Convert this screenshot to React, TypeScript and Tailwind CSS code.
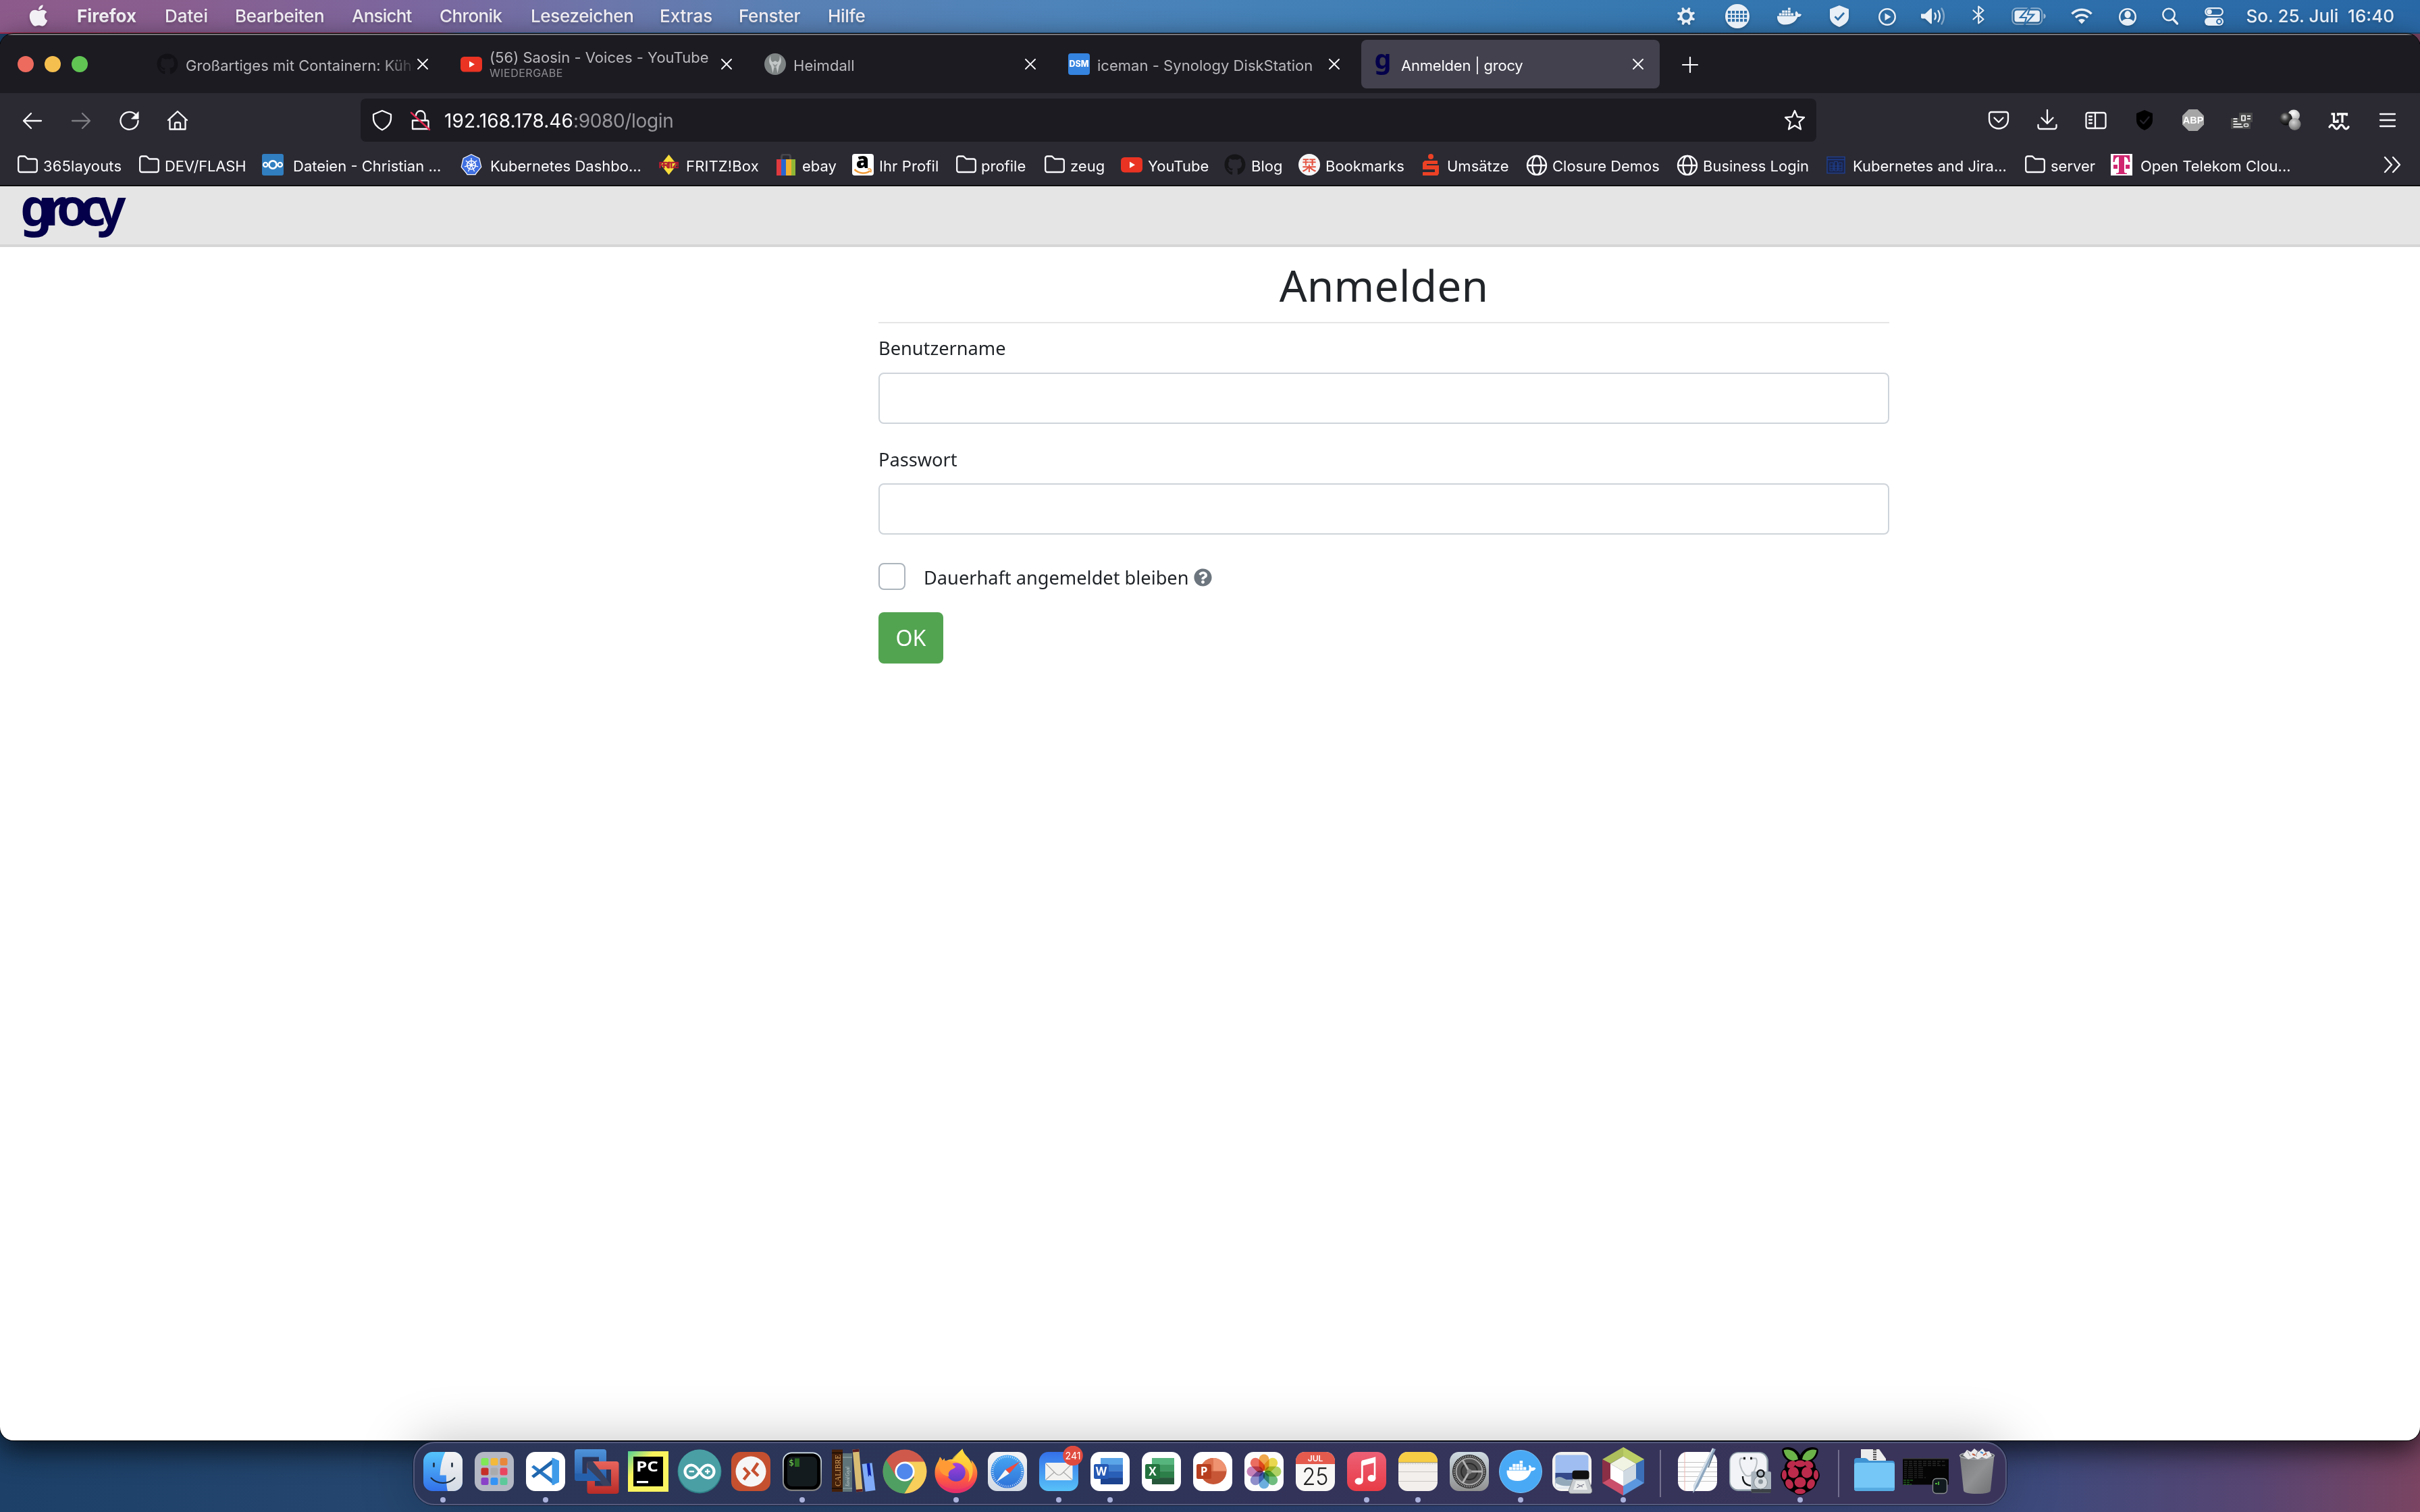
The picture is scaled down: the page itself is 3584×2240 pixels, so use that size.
import React from "react";
import type { ReactNode } from "react";
import { FaApple, FaDocker, FaGithub, FaQuestionCircle } from "react-icons/fa";

/* ------------------------------------------------------------------ */
/* macOS menu bar                                                      */
/* ------------------------------------------------------------------ */

const menus = [
  { label: "Firefox", cls: "w-[130px] font-bold" },
  { label: "Datei", cls: "w-[104px]" },
  { label: "Bearbeiten", cls: "w-[173px] tracking-[-0.28px]" },
  { label: "Ansicht", cls: "w-[130px] tracking-[-0.8px]" },
  { label: "Chronik", cls: "w-[135px] tracking-[-0.63px]" },
  { label: "Lesezeichen", cls: "w-[191px] tracking-[-0.35px]" },
  { label: "Extras", cls: "w-[117px]" },
  { label: "Fenster", cls: "w-[132px] tracking-[-0.26px]" },
  { label: "Hilfe", cls: "w-[60px] tracking-[-0.31px]" },
];

function MenuBar() {
  return (
    <div className="flex h-12 w-full shrink-0 items-center bg-[linear-gradient(90deg,#8d5b8b_0%,#885f90_8%,#7a68a0_18%,#6c76aa_25%,#5a80b4_32%,#4d84ba_44%,#4280b6_55%,#3577b0_70%,#2e70ac_84%,#2968a6_100%)] pl-[43px] pr-[38px] text-[26px] font-medium text-[#f3f0f5]">
      <FaApple className="mt-[-3px] h-9 w-7 shrink-0 drop-shadow-[0_2px_2px_rgba(0,0,0,0.25)]" />
      <div className="ml-[43px] flex h-12 items-center leading-[48px] [text-shadow:0_3px_4px_rgba(0,0,0,0.22)]">
        {menus.map((m) => (
          <span key={m.label} className={`shrink-0 whitespace-nowrap ${m.cls}`}>
            {m.label}
          </span>
        ))}
      </div>
      <div className="ml-auto flex h-12 items-center text-[#e9eff6] drop-shadow-[0_2px_2px_rgba(0,0,0,0.2)]">
        {/* gear */}
        <svg className="h-[28px] w-[28px]" viewBox="0 0 28 28">
          <circle cx="14" cy="14" r="7.6" fill="none" stroke="currentColor" strokeWidth="4" />
          {[22, 67, 112, 157, 202, 247, 292, 337].map((a) => (
            <path key={a} d="M11.6 5.5l1-5h2.8l1 5z" fill="currentColor" transform={`rotate(${a} 14 14)`} />
          ))}
        </svg>
        {/* grid globe */}
        <svg className="ml-[44px] h-9 w-9" viewBox="0 0 36 36">
          <circle cx="18" cy="18" r="18" fill="currentColor" />
          {[10, 16, 22].map((y) =>
            [4, 10, 16, 22, 28].map((x) => <rect key={`${x}-${y}`} x={x} y={y} width="4.2" height="4.2" fill="#2f6fa8" />),
          )}
        </svg>
        <FaDocker className="ml-[41px] h-[30px] w-9" />
        {/* shield check */}
        <svg className="ml-[41px] h-8 w-[30px]" viewBox="0 0 30 32">
          <path d="M15 0l14 5.500v11C29 24 23 29 15 32 7 29 1 24 1 16.500V5.500z" fill="currentColor" />
          <path d="M8.500 16.500l4.500 4.500 9-10" fill="none" stroke="#2f6fa8" strokeWidth="2.800" />
        </svg>
        {/* play */}
        <svg className="ml-[43px] h-[28px] w-[26px]" viewBox="0 0 26 28">
          <circle cx="13" cy="15" r="11.800" fill="none" stroke="currentColor" strokeWidth="2.400" />
          <path d="M9.500 9.500v11l9-5.500z" fill="currentColor" />
        </svg>
        {/* volume */}
        <svg className="ml-[37px] h-[28px] w-9" viewBox="0 0 36 28">
          <path d="M0 10.500h6l8-7.500c1-.8 2-.3 2 .8v20.400c0 1.100-1 1.600-2 .8l-8-7.500H2a2 2 0 0 1-2-2z" fill="currentColor" />
          <g fill="none" stroke="currentColor" strokeWidth="2.400" strokeLinecap="round">
            <path d="M20.500 9.500c1.600 2.700 1.600 6.300 0 9" />
            <path d="M25.500 6c3 5 3 11 0 16" />
            <path d="M30.500 2.500c4.600 7 4.600 16 0 23" opacity=".45" />
          </g>
        </svg>
        {/* bluetooth */}
        <svg className="ml-[40px] mt-[-4px] h-[28px] w-[18px]" viewBox="0 0 18 28">
          <path d="M1.500 7.500l15 13L9.200 26.500v-25L16.500 7.500l-15 13" fill="none" stroke="currentColor" strokeWidth="2.200" strokeLinejoin="round" strokeLinecap="round" />
        </svg>
        {/* battery */}
        <svg className="ml-[40px] h-[26px] w-[51px]" viewBox="0 0 51 26">
          <rect x="1.200" y="1.200" width="44" height="23.600" rx="6.500" fill="none" stroke="currentColor" strokeWidth="2" opacity=".5" />
          <path d="M47.500 9v8c2.200-.8 3.200-2.200 3.200-4s-1-3.200-3.200-4z" fill="currentColor" opacity=".6" />
          <rect x="4.500" y="4.500" width="37.400" height="17" rx="3.500" fill="currentColor" />
          <path d="M26 0L13 15h9l-3 11 14-15.500h-9L27.500 0z" fill="currentColor" stroke="#2f6fa8" strokeWidth="2.200" />
        </svg>
        {/* wifi */}
        <svg className="ml-[37px] h-[26px] w-8" viewBox="0 0 32 26">
          <g fill="none" stroke="currentColor" strokeWidth="3.600">
            <path d="M1.500 9.500c8-8.400 21-8.400 29 0" />
            <path d="M7 15c5-5 13-5 18 0" />
          </g>
          <path d="M11 19c2.800-2.700 7.200-2.700 10 0l-5 5.500z" fill="currentColor" />
        </svg>
        {/* user */}
        <svg className="ml-[39px] h-[28px] w-[26px]" viewBox="0 0 26 28">
          <circle cx="13" cy="15" r="11.800" fill="none" stroke="currentColor" strokeWidth="2.400" />
          <ellipse cx="13" cy="11.500" rx="4.600" ry="5.400" fill="currentColor" />
          <path d="M4.500 22c2-3.600 5-4 8.500-4s6.500.4 8.500 4c-2.400 2.800-5.200 4-8.500 4s-6.100-1.200-8.500-4z" fill="currentColor" />
        </svg>
        {/* search */}
        <svg className="ml-[38px] h-[26px] w-6" viewBox="0 0 24 26">
          <circle cx="10" cy="10.500" r="8.700" fill="none" stroke="currentColor" strokeWidth="2.500" />
          <path d="M16 17l6.500 7" stroke="currentColor" strokeWidth="3.400" strokeLinecap="round" />
        </svg>
        {/* control centre */}
        <svg className="ml-[39px] h-[28px] w-[28px]" viewBox="0 0 28 28">
          <rect x="1.200" y="2.200" width="25.600" height="10.600" rx="5.300" fill="none" stroke="currentColor" strokeWidth="2.200" />
          <circle cx="7" cy="7.500" r="3.800" fill="currentColor" />
          <rect x="0" y="16" width="28" height="12" rx="6" fill="currentColor" />
          <circle cx="21.500" cy="22" r="3.400" fill="none" stroke="#2c6ba8" strokeWidth="2" />
        </svg>
        <span className="ml-[34px] whitespace-pre leading-[48px]">{"So. 25. Juli  16:40"}</span>
      </div>
    </div>
  );
}

/* ------------------------------------------------------------------ */
/* Firefox tab strip                                                   */
/* ------------------------------------------------------------------ */

function CloseX() {
  return (
    <svg className="h-4 w-4 shrink-0" viewBox="0 0 16 16">
      <path d="M1 1l14 14M15 1L1 15" stroke="#fbfbfe" strokeWidth="1.900" strokeLinecap="round" />
    </svg>
  );
}

function YouTubeIcon() {
  return (
    <svg className="h-8 w-8 shrink-0" viewBox="0 0 32 32">
      <rect x="0" y="5" width="32" height="22.500" rx="5.500" fill="#ea3323" />
      <path d="M13 11.500v9.500l8-4.750z" fill="#fff" />
    </svg>
  );
}

function Tab({ icon, title, sub, active, fade }: { icon: ReactNode; title: string; sub?: string; active?: boolean; fade?: boolean }) {
  return (
    <div className="flex h-full w-[450px] shrink-0 items-center px-1">
      <div className={`flex h-[72px] w-[442px] items-center pl-4 pr-[24px] ${active ? "rounded-lg bg-[#42414d] text-[#fbfbfe]" : "text-[#b9b9bd]"}`}>
        {icon}
        <div
          className={`ml-[11px] w-[337px] overflow-hidden whitespace-nowrap text-[22px] leading-7 ${
            fade ? "[mask-image:linear-gradient(90deg,#000_86%,transparent_102%)]" : ""
          } ${sub ? "mt-[-1px]" : "mt-[3px]"}`}
        >
          <div className={active ? "tracking-[-0.2px]" : "tracking-[0.03px]"}>{title}</div>
          {sub && <div className="mt-[-1px] text-[16px] leading-[20px] tracking-[0.5px] text-[#8d8d92]">{sub}</div>}
        </div>
        <div className="ml-auto">
          <CloseX />
        </div>
      </div>
    </div>
  );
}

function TabStrip() {
  return (
    <div className="flex h-[88px] shrink-0 items-center border-t-2 border-[#77777b] bg-[#1c1b22]">
      <div className="flex h-full w-[212px] shrink-0 items-center gap-4 pl-[26px]">
        <span className="h-6 w-6 rounded-full bg-[#ed6a5e]" />
        <span className="h-6 w-6 rounded-full bg-[#f5bf4f]" />
        <span className="h-6 w-6 rounded-full bg-[#61c554]" />
      </div>
      <Tab icon={<FaGithub className="h-8 w-8 shrink-0 text-[#121216]" />} title="Großartiges mit Containern: Kühlsch" fade />
      <Tab icon={<YouTubeIcon />} title="(56) Saosin - Voices - YouTube" sub="WIEDERGABE" />
      <Tab
        icon={
          <svg className="h-8 w-8 shrink-0" viewBox="0 0 32 32">
            <circle cx="16" cy="16" r="16" fill="#7e8384" />
            <path d="M9.500 3.500c-3.500 6-3 11 .5 15l2.500 11 2-9h3l2 9 2.500-11c3.500-4 4-9 .5-15 .8 5.500-.5 8-3 9.500L16 11l-3.500 2c-2.500-1.500-3.800-4-3-9.500z" fill="#c3c7c7" />
            <path d="M12 15l4 2.500 4-2.500-2.500 5h-3z" fill="#8d9192" />
          </svg>
        }
        title="Heimdall"
      />
      <Tab
        icon={
          <svg className="h-8 w-8 shrink-0" viewBox="0 0 32 32">
            <rect width="32" height="32" rx="4" fill="#3584e0" />
            <text x="16" y="20" textAnchor="middle" fontFamily="Inter" fontWeight="800" fontSize="12.500" fill="#fff">
              DSM
            </text>
          </svg>
        }
        title="iceman - Synology DiskStation"
      />
      <Tab
        active
        icon={
          <svg className="h-8 w-8 shrink-0 overflow-visible" viewBox="0 0 32 32">
            <text x="16" y="22.500" textAnchor="middle" fontFamily="Noto Sans" fontWeight="700" fontSize="40" fill="#04004a">
              g
            </text>
          </svg>
        }
        title="Anmelden | grocy"
      />
      <svg className="ml-[29px] mt-[2px] h-6 w-6 shrink-0" viewBox="0 0 24 24">
        <path d="M12 1v22M1 12h22" stroke="#fbfbfe" strokeWidth="2.200" strokeLinecap="round" />
      </svg>
    </div>
  );
}

/* ------------------------------------------------------------------ */
/* Navigation toolbar                                                  */
/* ------------------------------------------------------------------ */

function NavIcon({ children, cls = "" }: { children: ReactNode; cls?: string }) {
  return (
    <svg
      className={`h-8 w-8 shrink-0 ${cls}`}
      viewBox="0 0 32 32"
      fill="none"
      stroke="#fbfbfe"
      strokeWidth="2.300"
      strokeLinecap="round"
      strokeLinejoin="round"
    >
      {children}
    </svg>
  );
}

function Toolbar() {
  return (
    <div className="flex h-[80px] shrink-0 items-center">
      <div className="flex w-[534px] shrink-0 gap-[39.5px] pl-8">
        <NavIcon>
          <path d="M29 17H3M14 6L3 17l11 11" />
        </NavIcon>
        <NavIcon cls="opacity-40">
          <path d="M3 17h26M18 6l11 11-11 11" />
        </NavIcon>
        <NavIcon>
          <path d="M29.500 17a13 13 0 1 1-4-9.500" />
          <path d="M30 4v10H20z" fill="#fbfbfe" strokeWidth="1" />
        </NavIcon>
        <NavIcon>
          <path d="M2 16L16 3l14 13M4.500 14v15.500h23V14" />
          <path d="M12 29V21.500a2 2 0 0 1 2-2h4a2 2 0 0 1 2 2V29" />
        </NavIcon>
      </div>
      <div className="flex h-16 w-[2156px] shrink-0 items-center rounded-lg bg-[#1c1b22] pl-4 pr-4">
        <NavIcon>
          <path d="M16 2l13 5.500v5C29 21 23 27.500 16 30.500 9 27.500 3 21 3 12.500v-5z" />
        </NavIcon>
        <NavIcon cls="ml-[24px]">
          <path d="M5 16.500h22a1.500 1.500 0 0 1 1.500 1.500v11H5zM10 9a6.500 6.500 0 0 1 13.500 0v7" />
          <path d="M3 5l27 25" stroke="#e22850" strokeWidth="2.600" />
        </NavIcon>
        <span className="ml-[20px] mt-[1px] text-[28px] leading-8 tracking-[0.1px] text-[#fbfbfe]">192.168.178.46</span>
        <span className="mt-[1px] text-[28px] leading-8 tracking-[-0.35px] text-[#97979c]">:9080/login</span>
        <NavIcon cls="ml-auto">
          <path d="M16 2l4 9.200 10 .8-7.500 6.800L25 29.500l-9-5.500-9 5.500 2.500-10.700L2 12l10-.8z" />
        </NavIcon>
      </div>
      <div className="ml-auto flex shrink-0 items-center gap-10 pr-8">
        <NavIcon>
          <path d="M5 4h22a3 3 0 0 1 3 3v7.500C30 23 24 28.500 16 28.500S2 23 2 14.500V7a3 3 0 0 1 3-3z" />
          <path d="M9.500 12.500l6.500 6.500 6.500-6.500" />
        </NavIcon>
        <NavIcon>
          <path d="M16 1v20M7.500 12.500L16 21l8.500-8.500M2.500 23v3a3 3 0 0 0 3 3h21a3 3 0 0 0 3-3v-3" />
        </NavIcon>
        <NavIcon>
          <rect x="1.500" y="5" width="29" height="23" rx="3" />
          <path d="M15 5v23M6 10.500h4M6 15.500h4M6 20.500h4" />
        </NavIcon>
        <NavIcon>
          <path d="M16 1l12 5v10c0 7-5 12-12 15C9 28 4 23 4 16V6z" fill="#000" stroke="none" />
          <path d="M10 16.500l4.500 4.500 8-9.500" stroke="#24232b" />
        </NavIcon>
        <NavIcon>
          <path d="M9.500 0h13L32 9.500v13L22.500 32h-13L0 22.500v-13z" fill="#a6a6a6" stroke="none" />
          <text x="16" y="21" textAnchor="middle" fontFamily="Liberation Sans" fontWeight="700" fontSize="14.500" fill="#fff" stroke="none">
            ABP
          </text>
        </NavIcon>
        <NavIcon>
          <path d="M12 5h20v14h-3v10H0V13h12z" fill="#4a4a4b" stroke="none" />
          <path d="M3.500 14h6M3.500 18h6M3.500 22h12M3.500 26h14M24 10h5M24 14h5" stroke="#e4e4e4" strokeWidth="2" strokeLinecap="butt" />
          <rect x="16" y="9.500" width="5" height="7" stroke="#e4e4e4" strokeWidth="2" />
          <rect x="19.500" y="21.500" width="6" height="4" rx="1.500" stroke="#e4e4e4" strokeWidth="1.600" />
        </NavIcon>
        <NavIcon>
          <defs>
            <radialGradient id="ballDark" cx=".4" cy=".35" r=".7">
              <stop offset="0" stopColor="#b8b8b8" />
              <stop offset=".45" stopColor="#3c3c3c" />
              <stop offset="1" stopColor="#000" />
            </radialGradient>
            <radialGradient id="ballLight" cx=".45" cy=".3" r=".8">
              <stop offset="0" stopColor="#fff" />
              <stop offset="1" stopColor="#9d9d9d" />
            </radialGradient>
            <radialGradient id="ballMid" cx=".4" cy=".35" r=".8">
              <stop offset="0" stopColor="#d5d5d5" />
              <stop offset="1" stopColor="#5a5a5a" />
            </radialGradient>
          </defs>
          <ellipse cx="21" cy="9" rx="9" ry="8.500" fill="url(#ballLight)" stroke="none" />
          <circle cx="9.500" cy="14" r="9.500" fill="url(#ballDark)" stroke="none" />
          <circle cx="22.500" cy="22" r="9" fill="url(#ballMid)" stroke="none" />
        </NavIcon>
        <NavIcon>
          <g stroke="#fff" strokeWidth="3.200" strokeLinecap="butt" strokeLinejoin="miter">
            <path d="M4.500 6.800H8.500v11.500h5.500v-3" />
            <path d="M14.500 9.500V6.800h13v2.700M21 6.800v13" />
          </g>
          <path d="M2 26c2.300-4 4.600-4 7 0s4.700 4 7 0 4.700-4 7 0 4.700 4 7 0" stroke="#fff" strokeWidth="3.200" />
        </NavIcon>
        <NavIcon>
          <path d="M5 7h22M5 16h22M5 25h22" />
        </NavIcon>
      </div>
    </div>
  );
}

/* ------------------------------------------------------------------ */
/* Bookmarks bar                                                       */
/* ------------------------------------------------------------------ */

function FolderIcon() {
  return (
    <svg className="h-8 w-8 shrink-0" viewBox="0 0 32 32" fill="none" stroke="#fbfbfe" strokeWidth="2.300" strokeLinejoin="round">
      <path d="M2.200 6.500a3 3 0 0 1 3-3h5.500a3 3 0 0 1 2.300 1l3 3h10.800a3 3 0 0 1 3 3v13.500a3 3 0 0 1-3 3H5.200a3 3 0 0 1-3-3z" />
    </svg>
  );
}

function GlobeIcon() {
  return (
    <svg className="h-8 w-8 shrink-0" viewBox="0 0 32 32" fill="none" stroke="#fbfbfe" strokeWidth="2.400">
      <circle cx="16" cy="17" r="14" />
      <ellipse cx="16" cy="17" rx="6.500" ry="14" />
      <path d="M2 17h28" />
    </svg>
  );
}

function Wheel() {
  return (
    <svg className="h-8 w-8 shrink-0" viewBox="0 0 32 32">
      <path d="M16 .8l11.800 5.700 3 12.800-8.200 10.200-.6 1.200H10l-.6-1.200L1.200 19.300l3-12.800z" fill="#3f6fe0" stroke="#fff" strokeWidth="1.200" strokeLinejoin="round" />
      <circle cx="16" cy="16.500" r="6.300" fill="none" stroke="#fff" strokeWidth="1.600" />
      {[0, 51.400, 102.900, 154.300, 205.700, 257.100, 308.600].map((a) => (
        <path key={a} d="M16 16.500V6" stroke="#fff" strokeWidth="1.400" transform={`rotate(${a} 16 16.500)`} />
      ))}
      <circle cx="16" cy="16.500" r="2" fill="#fff" />
    </svg>
  );
}

const bookmarks: { label: string; cls: string; icon: ReactNode }[] = [
  { label: "365layouts", cls: "w-[180px] gap-[7px] tracking-[0.15px]", icon: <FolderIcon /> },
  { label: "DEV/FLASH", cls: "w-[183px] gap-[7px] tracking-[-0.2px]", icon: <FolderIcon /> },
  {
    label: "Dateien - Christian ...",
    cls: "w-[294px] gap-[14px]",
    icon: (
      <svg className="h-8 w-8 shrink-0" viewBox="0 0 32 32" fill="none" stroke="#fff">
        <rect width="32" height="32" rx="3" fill="#317fc1" stroke="none" />
        <circle cx="16" cy="16" r="5.600" strokeWidth="2.700" />
        <circle cx="5.200" cy="16" r="3.200" strokeWidth="2.200" />
        <circle cx="26.800" cy="16" r="3.200" strokeWidth="2.200" />
      </svg>
    ),
  },
  { label: "Kubernetes Dashbo...", cls: "w-[293px] gap-[12px]", icon: <Wheel /> },
  {
    label: "FRITZ!Box",
    cls: "w-[173px] gap-[9px] tracking-[0.15px]",
    icon: (
      <svg className="h-8 w-8 shrink-0" viewBox="0 0 32 32">
        <path d="M15.500 1l12 15-12 15L3.500 16z" fill="#f8de3a" />
        <text x="16" y="21" textAnchor="middle" fontFamily="Liberation Sans" fontWeight="700" fontSize="13.500" fill="#d3202f" stroke="#8d1a30" strokeWidth=".6" textLength="31">
          FRITZ!
        </text>
      </svg>
    ),
  },
  {
    label: "ebay",
    cls: "w-[114px] gap-[8px]",
    icon: (
      <svg className="h-8 w-8 shrink-0" viewBox="0 0 32 32">
        <path d="M9.500 9V5q0-4 3-4h7q3 0 3 4v4" fill="none" stroke="#45454b" strokeWidth="3" />
        <path d="M2 8h7v24H2z" fill="#e0393e" />
        <path d="M9 8h7v24H9z" fill="#2a66d1" />
        <path d="M16 8h8v24h-8z" fill="#efb12f" />
        <path d="M24 8h6v24h-6z" fill="#8fb735" />
      </svg>
    ),
  },
  {
    label: "Ihr Profil",
    cls: "w-[153px] gap-[8px] tracking-[0.1px]",
    icon: (
      <svg className="h-8 w-8 shrink-0 overflow-visible" viewBox="0 0 32 32">
        <rect width="32" height="32" rx="4" fill="#fff" />
        <text x="15.500" y="20.500" textAnchor="middle" fontFamily="Open Sans" fontWeight="800" fontSize="31" fill="#000">
          a
        </text>
        <path d="M3.500 23c7 7 17 7 23 2" fill="none" stroke="#f19b38" strokeWidth="2.500" />
        <path d="M23 22.500c4-1 6-.5 4.500 5" fill="none" stroke="#f19b38" strokeWidth="1.800" />
      </svg>
    ),
  },
  { label: "profile", cls: "w-[131px] gap-[6px]", icon: <FolderIcon /> },
  { label: "zeug", cls: "w-[114px] gap-[7px]", icon: <FolderIcon /> },
  { label: "YouTube", cls: "w-[153px] gap-[8px]", icon: <YouTubeIcon /> },
  { label: "Blog", cls: "w-[110px] gap-[8px]", icon: <FaGithub className="h-8 w-8 shrink-0 text-[#151518]" /> },
  {
    label: "Bookmarks",
    cls: "w-[180px] gap-[8px]",
    icon: (
      <svg className="h-8 w-8 shrink-0" viewBox="0 0 32 32">
        <circle cx="16" cy="16" r="16" fill="#f6f6f6" />
        <text x="16" y="23.500" textAnchor="middle" fontFamily="Noto Sans CJK JP" fontSize="21" fill="#e4513f" stroke="#e4513f" strokeWidth=".5">
          栞
        </text>
      </svg>
    ),
  },
  {
    label: "Umsätze",
    cls: "w-[157px] gap-[8px]",
    icon: (
      <svg className="h-8 w-8 shrink-0" viewBox="0 0 32 32" fill="#ec4125">
        <circle cx="16" cy="4" r="4" />
        <path d="M7 10h19v5H10v2h18v12l-2 3H4v-5h18v-4H4V13z" />
      </svg>
    ),
  },
  { label: "Closure Demos", cls: "w-[223px] gap-[7px]", icon: <GlobeIcon /> },
  { label: "Business Login", cls: "w-[220px] gap-[7px]", icon: <GlobeIcon /> },
  {
    label: "Kubernetes and Jira...",
    cls: "w-[295px] gap-[9px]",
    icon: (
      <svg className="h-8 w-8 shrink-0" viewBox="0 0 32 32" fill="none" stroke="#1f3f8e" strokeWidth="1.400">
        <rect x="3" y="4.500" width="26" height="24" fill="#1b2447" />
        <path d="M3 8.500h26" />
        <path d="M7 13h5v12H7zM13.500 11.500h5v13.500h-5zM20 13h5v12h-5zM7 18h18M7 22h18" strokeWidth="1" />
      </svg>
    ),
  },
  { label: "server", cls: "w-[128px] gap-[7px]", icon: <FolderIcon /> },
  {
    label: "Open Telekom Clou...",
    cls: "w-[300px] gap-[12px]",
    icon: (
      <svg className="h-8 w-8 shrink-0" viewBox="0 0 32 32">
        <rect width="32" height="32" fill="#fff" />
        <path d="M4 2h24l.5 10h-2.200c-.5-5-2.300-7.500-6.300-7.500V26c0 2 1 2.600 4 2.600V30H8v-1.400c3 0 4-.6 4-2.600V4.500c-4 0-5.800 2.500-6.300 7.500H3.500zM4 16h6v6H4zM22 16h6v6h-6z" fill="#d02670" />
      </svg>
    ),
  },
];

function BookmarksBar() {
  return (
    <div className="flex h-14 shrink-0 items-center pb-[4px] pl-[25px] pr-[27px]">
      {bookmarks.map((b) => (
        <div key={b.label} className={`flex h-8 shrink-0 items-center whitespace-nowrap text-[22px] leading-7 text-[#fbfbfe] ${b.cls}`}>
          {b.icon}
          <span className="mt-[4px]">{b.label}</span>
        </div>
      ))}
      <svg className="ml-auto h-7 w-7 shrink-0" viewBox="0 0 28 28" fill="none" stroke="#fbfbfe" strokeWidth="2.300" strokeLinecap="round" strokeLinejoin="round">
        <path d="M3 3l10 11L3 25M15 3l10 11-10 11" />
      </svg>
    </div>
  );
}

/* ------------------------------------------------------------------ */
/* grocy login page                                                    */
/* ------------------------------------------------------------------ */

function LoginPage() {
  return (
    <div className="flex-1 bg-white font-['Noto_Sans',sans-serif] text-[#212529]">
      <header className="h-[90px] border-b-4 border-[#d6d6d6] bg-[#e5e5e5] pl-[30px]">
        <span className="block h-[86px] text-[75px] font-bold leading-[58px] tracking-[-12.8px] text-[#04004a]">grocy</span>
      </header>
      <main className="ml-[1301px] w-[1497px] pt-[18px]">
        <h1 className="text-center text-[64px] leading-[77px] tracking-[0.2px]">Anmelden</h1>
        <div className="mt-4 h-[2px] bg-[#e5e5e5]" />
        <form className="pt-[17px]">
          <label className="block h-10 text-[27.2px] leading-10">Benutzername</label>
          <div className="mt-[16px] h-[76px] rounded-lg border-2 border-[#ced4da] bg-white" />
          <label className="mt-[33px] block h-10 text-[27.2px] leading-10">Passwort</label>
          <div className="mt-[15px] h-[76px] rounded-lg border-2 border-[#ced4da] bg-white" />
          <div className="mt-[42px] flex h-10 items-center">
            <span className="h-10 w-10 rounded-lg border-2 border-[#adb5bd] bg-white" />
            <span className="ml-[27px] mt-[3px] text-[27.2px] leading-10">Dauerhaft angemeldet bleiben</span>
            <FaQuestionCircle className="ml-[7px] mt-[3px] h-[27px] w-[27px] text-[#6c757d]" />
          </div>
          <button type="button" className="mt-[33px] block h-[76px] w-24 rounded-lg bg-[#53a451] text-[32px] leading-[76px] text-white">
            OK
          </button>
        </form>
      </main>
    </div>
  );
}

/* ------------------------------------------------------------------ */
/* Dock                                                                */
/* ------------------------------------------------------------------ */

function Tile({ fill = "#fdfdfd" }: { fill?: string }) {
  return <rect x="9" y="9" width="58" height="58" rx="13.500" fill={fill} />;
}

function Finder() {
  return (
    <>
      <Tile fill="url(#finderBlue)" />
      <path d="M41.500 9H53.500A13.500 13.500 0 0 1 67 22.500v31A13.500 13.500 0 0 1 53.500 67H45c-1.500-6-2-12-2.200-23.500H33.500C34 30 37 18 41.500 9z" fill="url(#silver)" />
      <path d="M20.500 47.500c9 10 26 10 35 0" fill="none" stroke="#1c2b3d" strokeWidth="2" strokeLinecap="round" />
      <path d="M24.500 26v4.500M51.500 26v4.500" stroke="#1c2b3d" strokeWidth="2.600" strokeLinecap="round" />
    </>
  );
}

const padColors = ["#7fe857", "#f2b93a", "#e8873a", "#c62f28", "#a9abad", "#ea4560", "#8a42c8", "#3593f5", "#5dc99a"];

function Launchpad() {
  return (
    <>
      <Tile fill="#b4b8c4" />
      {padColors.map((c, i) => (
        <rect key={c} x={18.500 + (i % 3) * 14} y={18 + Math.floor(i / 3) * 14.500} width="11" height="11" rx="2.500" fill={c} />
      ))}
    </>
  );
}

function Code() {
  return (
    <>
      <Tile fill="#fff" />
      <path d="M17 31.500l3.500-3L51 51v7.500z" fill="#2a7ac7" />
      <path d="M17 44.500l3.500 3.200L51 25v-7z" fill="#1f66ad" />
      <path d="M47.500 17.500l10.500 4.500v32l-10.500 4.500z" fill="#3d9bea" />
    </>
  );
}

function VmFusion() {
  return (
    <>
      <path fillRule="evenodd" d="M9 5h39q4 0 4 4v39q0 4-4 4H9q-4 0-4-4V9q0-4 4-4zM16.500 16.500V41H41V16.500z" fill="url(#vmBlue)" />
      <path fillRule="evenodd" d="M27.500 23h39q4 0 4 4v40q0 4-4 4h-39q-4 0-4-4V27q0-4 4-4zM35 35v24.500h24V35z" fill="url(#vmRed)" />
      <path d="M23.500 23H32l28 36H47L23.500 32z" fill="#38415f" />
      <path d="M5 41h18.500v-9L44 52H9q-4 0-4-4z" fill="#2560ad" />
    </>
  );
}

function PyCharm() {
  return (
    <>
      <rect x="8" y="8" width="60" height="60" fill="url(#pycharm)" />
      <rect x="16" y="16" width="44" height="44" fill="#000" />
      <text x="20" y="38" fontFamily="Open Sans" fontWeight="700" fontSize="22" fill="#fff" textLength="33" lengthAdjust="spacingAndGlyphs">
        PC
      </text>
      <rect x="21" y="52" width="17" height="3.200" fill="#fff" />
    </>
  );
}

function Arduino() {
  return (
    <>
      <circle cx="38" cy="38" r="32.500" fill="#2f8288" />
      <circle cx="38" cy="37" r="31.500" fill="#4a9fa5" />
      <path
        d="M38 38c-4-6.500-7.500-9.500-12-9.500a9.500 9.500 0 0 0 0 19c4.500 0 8-3 12-9.500zc4 6.500 7.500 9.500 12 9.500a9.500 9.500 0 0 0 0-19c-4.500 0-8 3-12 9.500z"
        fill="none"
        stroke="#fff"
        strokeWidth="4.200"
      />
      <path d="M22.500 38h7.500M46 38h7.500M49.800 34.200v7.600" stroke="#fff" strokeWidth="2.300" />
    </>
  );
}

function RemoteDesktop() {
  return (
    <>
      <Tile fill="#c55030" />
      <circle cx="38" cy="38" r="22.500" fill="#f6f6f6" />
      <g fill="none" stroke="#c55030" strokeWidth="4.400">
        <path d="M27.500 32.500l7.500 8-7.500 9.500" />
        <path d="M49 44.500l-8-8 7.500-11" />
      </g>
    </>
  );
}

function Terminal() {
  return (
    <>
      <rect x="9" y="9.500" width="58" height="57.500" rx="13.500" fill="url(#termEdge)" />
      <rect x="10.800" y="11.300" width="54.400" height="53.400" rx="12" fill="#000" />
      <rect x="16" y="16" width="44" height="44" rx="7" fill="#141b1e" />
      <text x="18" y="29" fontFamily="DejaVu Sans Mono" fontSize="13" fill="#7ee35a">
        $
      </text>
      <rect x="27" y="18.500" width="7" height="12.500" fill="#2b6b22" />
    </>
  );
}

function Calibre() {
  return (
    <>
      <rect x="6" y="5.500" width="16" height="62.500" fill="#45200a" />
      <path d="M6 10.500h16M6 63h16" stroke="#000" />
      <text transform="translate(18.500 60) rotate(-90)" fontFamily="Liberation Serif" fontSize="12.500" fill="#d9a560" textLength="47" lengthAdjust="spacingAndGlyphs">
        CALIBRE
      </text>
      <rect x="22" y="11" width="14" height="57" fill="#5f7478" />
      <path d="M22 17h14M22 63h14" stroke="#9fb0b2" />
      <text transform="translate(31.500 60) rotate(-90)" fontFamily="Liberation Serif" fontStyle="italic" fontSize="8" fill="#c7d2d2" textLength="29" lengthAdjust="spacingAndGlyphs">
        Kovid Goyal
      </text>
      <g transform="rotate(-5 44 38)">
        <rect x="39.500" y="5" width="9.500" height="63" fill="#d8bc74" />
        <path d="M39.500 5H49v4h-9.500zM39.500 64.500H49v3.500h-9.500z" fill="#5c1e22" />
      </g>
      <g transform="rotate(-7 60 46)">
        <rect x="53" y="26" width="15" height="41" fill="#7fabf8" />
        <path d="M60 26h4.500v20l-2.200-3-2.300 3z" fill="#0a1fa5" />
      </g>
    </>
  );
}

function Chrome() {
  return (
    <>
      <circle cx="38" cy="38" r="32.500" fill="#cf5a4b" />
      <path d="M10.500 20.800A32.500 32.500 0 0 0 38 70.500L52 46.500 38 52.500 25 45.500z" fill="#4f9f63" />
      <path d="M66.900 23.500H38l14 23-14.500 24A32.500 32.500 0 0 0 66.900 23.500z" fill="#f7cf5a" />
      <circle cx="38" cy="38" r="14.600" fill="#fff" />
      <circle cx="38" cy="38" r="11.800" fill="#5087ec" />
    </>
  );
}

function Firefox() {
  return (
    <>
      <path d="M38 70C20.500 70 6.500 57 6.500 40c0-9 3-13.500 5-17 1-1.800 1.500-4 2.500-6.500 1.500 1.200 2.800 3 3.500 5.500 1.200-1.300 2-2.500 3.500-3.500v6c4-4.500 9-5 12.500-4C37 17 40 11 47.500 4.500 48.500 10 52 13.500 56 18c2.500 3 4 6 4.500 8.500.5-2 .3-3.500-.3-5.500C66 26.500 69 33 69.300 38.500 70.500 57 55.500 70 38 70z" fill="url(#foxFlame)" />
      <path d="M31 22c4-8 10-11 16.500-17.500C48.500 10 52 13.500 56 18c8 9.500 10 25 0 36 3-10 1-18-4-22-3-2.500-8-8-21-10z" fill="#ffd83c" opacity=".75" />
      <circle cx="38" cy="39" r="13.800" fill="url(#foxGlobe)" />
      <path d="M14.500 17c1.500 1.200 2.500 3 3.200 5 8-1 12 1.500 14 3.500 2 2 2.300 4.200 5.500 5.500-1.500 3-6 3.500-8 5.500-2.500 2.500-3.200 5-1.500 9-8-1-14-6-15-14-.6-5 .5-10 1.800-14.500z" fill="#ff9a34" />
      <path d="M8 46c5 20 45 27 58.500 4C62 62 50 70 38 70S10.500 60 8 46z" fill="#e62d6b" opacity=".75" />
    </>
  );
}

function Safari() {
  return (
    <>
      <Tile fill="url(#silver)" />
      <circle cx="38" cy="38" r="24.500" fill="url(#safari)" />
      <circle cx="38" cy="38" r="22" fill="none" stroke="#fff" strokeOpacity=".75" strokeWidth="3" strokeDasharray=".9 2" />
      <path d="M56.500 23L40.800 41 35 35.300z" fill="#ee4b3e" />
      <path d="M21 54L35 35.300l5.800 5.700z" fill="#f6f6f6" />
    </>
  );
}

function Mail() {
  return (
    <>
      <Tile fill="url(#mail)" />
      <rect x="18" y="25" width="40.500" height="26" rx="2.500" fill="#f2f2f1" />
      <path d="M19 26.500L34 41.500q4.200 3.500 8.400 0L57.500 26.500M19 50l13-11.500M57.500 50l-13-11.500" fill="none" stroke="#a9a9a9" strokeWidth="1.200" />
      <circle cx="59" cy="14.500" r="14.800" fill="#e04b40" />
      <text x="59" y="20" textAnchor="middle" fontFamily="Inter" fontSize="14.500" fill="#fff" textLength="23" lengthAdjust="spacingAndGlyphs">
        241
      </text>
    </>
  );
}

function Office({ letter, shades, badge, round }: { letter: string; shades: string[]; badge: string; round?: boolean }) {
  return (
    <>
      <Tile fill="#fff" />
      {round ? (
        <>
          <circle cx="39" cy="37.500" r="19.500" fill={shades[2]} />
          <path d="M39 18a19.500 19.500 0 0 1 19.500 19.500H39z" fill={shades[0]} />
          <path d="M39 18a19.500 19.500 0 0 0-19.500 19.500H39z" fill={shades[1]} />
        </>
      ) : (
        shades.map((s, i) => <rect key={s} x="24" y={18 + i * 9.700} width="33" height="9.900" fill={s} />)
      )}
      <rect x="14" y="27" width="22" height="22" rx="2.500" fill={badge} />
      <text x="25" y="44" textAnchor="middle" fontFamily="Open Sans" fontWeight="700" fontSize="17" fill="#fff">
        {letter}
      </text>
    </>
  );
}

const petals = ["#f29a2e", "#e9d531", "#a3cc4a", "#57b36b", "#54a3dc", "#7d7cc4", "#bf6fae", "#ea5545"];

function Photos() {
  return (
    <>
      <Tile fill="#fcfcfc" />
      {petals.map((c, i) => (
        <rect key={c} x="30.500" y="12.500" width="15" height="24.500" rx="7.500" fill={c} fillOpacity=".85" className="mix-blend-multiply" transform={`rotate(${i * 45} 38 38)`} />
      ))}
    </>
  );
}

function Calendar() {
  return (
    <>
      <Tile fill="#f8f7f5" />
      <path d="M9 27v-4.500A13.500 13.500 0 0 1 22.500 9h31A13.500 13.500 0 0 1 67 22.500V27z" fill="#e45b4d" />
      <text x="38" y="22.500" textAnchor="middle" fontFamily="Inter" fontWeight="600" fontSize="12" fill="#fff">
        JUL
      </text>
      <text x="38" y="58" textAnchor="middle" fontFamily="Inter" fontWeight="300" fontSize="35" fill="#222" textLength="39" lengthAdjust="spacingAndGlyphs">
        25
      </text>
    </>
  );
}

function Music() {
  return (
    <>
      <Tile fill="url(#music)" />
      <path d="M31 23l19-5v30" fill="none" stroke="#fff" strokeWidth="2.600" />
      <path d="M30 23l21-5.500v7L30 30z" fill="#fff" />
      <path d="M31.300 24v28" stroke="#fff" strokeWidth="2.800" />
      <ellipse cx="26.500" cy="52.500" rx="6" ry="5" fill="#fff" />
      <ellipse cx="45.500" cy="48" rx="6" ry="5" fill="#fff" />
    </>
  );
}

function Notes() {
  return (
    <>
      <Tile fill="#f2efec" />
      <path d="M9 24v-1.500A13.500 13.500 0 0 1 22.500 9h31A13.500 13.500 0 0 1 67 22.500V24z" fill="#f8cd46" />
      <path d="M9 24.500h58" stroke="#a5945e" strokeWidth="1.200" />
      <path d="M9 26.500h58" stroke="#999" strokeDasharray="1 1.500" />
      <path d="M9 38.500h58M9 52.500h58" stroke="#c9c6c4" />
    </>
  );
}

function Settings() {
  return (
    <>
      <Tile fill="url(#prefs)" />
      <circle cx="38" cy="38" r="25" fill="#222" />
      <circle cx="38" cy="38" r="22.500" fill="none" stroke="#9a9a9a" strokeWidth="3" strokeDasharray="1.400 1.200" />
      <circle cx="38" cy="38" r="19.500" fill="#555" stroke="#aaa" strokeWidth="2" />
      <circle cx="38" cy="38" r="12" fill="#4a4a4a" stroke="#2b2b2b" strokeWidth="2" />
      <path d="M38 38h20M38 38L28 20.700M38 38L28 55.300" stroke="#b0b0b0" strokeWidth="3" />
      <circle cx="38" cy="38" r="3.500" fill="#8a8a8a" />
    </>
  );
}

const containers = [
  [21, 31.5],
  [26.2, 31.5],
  [31.4, 31.5],
  [36.6, 31.5],
  [41.8, 31.5],
  [26.2, 26.8],
  [31.4, 26.8],
  [36.6, 26.8],
  [36.6, 22],
];

function DockerApp() {
  return (
    <>
      <circle cx="38" cy="38" r="31.500" fill="#49a9f5" stroke="#7cc4f8" strokeWidth="1" />
      <path d="M17.500 36.500H50c1.200-3 .6-5.500-.2-7 1.500-1.800 3.500-.8 4.600 3 2-.7 5-.5 6 .8-1.500 3.400-4.200 4-6.700 4C50.500 46.500 44.500 52 33.500 52c-11 0-16.500-5-16-15.500z" fill="#fff" />
      {containers.map(([x, y]) => (
        <rect key={`${x}-${y}`} x={x} y={y} width="4.500" height="4.200" fill="#fff" />
      ))}
    </>
  );
}

function Preview() {
  return (
    <>
      <Tile fill="#f4f2ef" />
      <rect x="13.500" y="13.500" width="49" height="49" rx="4" fill="#9fbdf0" />
      <path d="M13.500 40h49v10h-49z" fill="#33498a" />
      <path d="M13.500 48q6-4 12 0t14 2v12.500h-22a4 4 0 0 1-4-4z" fill="#94a9ba" />
      <path d="M14 55q10 6 22 4v3.500H17.500a4 4 0 0 1-4-4z" fill="#eef2f4" />
      <path d="M40 48h22l5.500 17q1 5.500-4 5.500h-26q-5 0-4-5.500z" fill="#c9cdcf" stroke="#8d9194" />
      <path d="M44 52h13l4 13H40z" fill="#eceeee" />
      <path d="M46 57l8 4M45 62l11-5" stroke="#667" />
      <rect x="38.500" y="36.500" width="25" height="13" rx="4" fill="#111" />
    </>
  );
}

function NetBeans() {
  return (
    <>
      <path d="M38 2l31 18-11.500 6.500L38 15.500 18.500 26.500 7 20z" fill="#adbf5c" />
      <path d="M38 2l31 18-11.500 6.500L38 15.500z" fill="#bcce66" />
      <path d="M7 20l12 6v25L7 55z" fill="#8b2f47" />
      <path d="M7 55l12-7 19 11v14.500z" fill="#c94f6b" />
      <path d="M69 20l-12 6v25l12 4z" fill="#3b6fb8" />
      <path d="M69 55l-12-7-19 11v14.500z" fill="#5b97de" />
      <path d="M38 15.500L57 26.500 38 37.500 19 26.500z" fill="#f1f4e2" />
      <path d="M19 26.500l19 11V59.500l-19-11z" fill="#fff" />
      <path d="M57 26.500l-19 11V59.500l19-11z" fill="#cfd9e2" />
    </>
  );
}

function TextEdit() {
  return (
    <>
      <Tile fill="#fdfdfd" />
      <path d="M9 24.500h58M9 31.500h58M9 38.500h58M9 45.500h58M9 52.500h58" stroke="#c3c3c3" />
      <path d="M19 9.500v57" stroke="#efb6b2" />
      <path d="M60 3.500l5 1.500L39 60l-7.500 10 1-12z" fill="#8fa8c0" />
      <path d="M60 3.500l2 .6L35.500 59l-4 11 1-12z" fill="#d6e1ea" />
      <path d="M62.500 10L54 32" stroke="#4f657a" strokeWidth="1.500" />
    </>
  );
}

function DiskUtility() {
  return (
    <>
      <rect x="9" y="9" width="58" height="58" rx="13.500" fill="#8e9da8" />
      <rect x="10.500" y="10.500" width="54" height="54" rx="12" fill="#f1f3f6" />
      <path d="M32 18.500h-6c-3.500 4 0 17 6 24 2.500 3 8 3 10.500 0 6-7 9.500-20 6-24h-6" fill="none" stroke="#b9bec3" strokeWidth="2" />
      <path d="M30 18.500h3M40 18.500h3" stroke="#222" strokeWidth="3.500" />
      <path d="M29 45c0 8 4 13 12 14" fill="none" stroke="#15181b" strokeWidth="2.400" />
      <rect x="41.500" y="38" width="29.500" height="31.500" rx="2" fill="#a9b4bc" />
      <path d="M41.500 64h29.500v5.500H41.500z" fill="#3c4247" />
      <circle cx="55.500" cy="54" r="10" fill="#d9dfe2" stroke="#818b92" />
      <circle cx="55.500" cy="53" r="3.500" fill="#8b959c" />
      <circle cx="55.500" cy="41" r="5" fill="none" stroke="#15181b" strokeWidth="2.400" />
    </>
  );
}

function Raspberry() {
  return (
    <>
      <path d="M38 14C31 0 16 0 11.500 5c-1 6 2 13 8.500 17-5 4-5 8-5 11-8 6-7 15-2 20 2 11 12 14 17 17 5 4 11 4 16 0 5-3 15-6 17-17 5-5 6-14-2-20 0-3 0-7-5-11 6.500-4 9.500-11 8.500-17C60 0 45 0 38 14z" fill="#000" />
      <path d="M35 20C33 8 22 3.500 13.500 6.500 15 14 19 21 28 22z" fill="#6cb34a" />
      <path d="M41 20C43 8 54 3.500 62.500 6.500 61 14 57 21 48 22z" fill="#6cb34a" />
      <g fill="#bc2b4c">
        <ellipse cx="38" cy="26.500" rx="8" ry="5" />
        <ellipse cx="25" cy="27.500" rx="7" ry="4.800" transform="rotate(-35 25 27.500)" />
        <ellipse cx="51" cy="27.500" rx="7" ry="4.800" transform="rotate(35 51 27.500)" />
        <ellipse cx="28" cy="39.500" rx="8" ry="8.300" />
        <ellipse cx="48" cy="39.500" rx="8" ry="8.300" />
        <ellipse cx="38" cy="54" rx="8.500" ry="7.800" />
        <ellipse cx="14.500" cy="43" rx="3.600" ry="7.200" />
        <ellipse cx="61.500" cy="43" rx="3.600" ry="7.200" />
        <ellipse cx="22" cy="56.500" rx="5.500" ry="7.500" transform="rotate(-25 22 56.500)" />
        <ellipse cx="54" cy="56.500" rx="5.500" ry="7.500" transform="rotate(25 54 56.500)" />
        <ellipse cx="38" cy="67.500" rx="8" ry="4" />
      </g>
    </>
  );
}

function Downloads() {
  return (
    <>
      <path d="M18 5h27l10 14v16H18z" fill="#ececec" />
      <path d="M38.500 5v20" stroke="#4b4b4b" strokeWidth="5" strokeDasharray="2 1.500" />
      <path d="M8 22q0-4 4-4h12q2 0 3.500 1.500L30 22h34q4 0 4 4v10H8z" fill="#3f93d2" />
      <rect x="8" y="25" width="60" height="42" rx="4" fill="#74c7f6" />
      <path d="M8 62h60v1q0 4-4 4H12q-4 0-4-4z" fill="#56ace2" />
    </>
  );
}

function TerminalWindow() {
  return (
    <>
      <rect x="4" y="18.500" width="68" height="39" fill="#050505" />
      <path d="M4 19h68" stroke="#555" />
      <path d="M6 23h60M6 26h52M6 29h63" stroke="#3a3a3a" strokeDasharray="5 2" />
      <path d="M6 32h30M6 35h28M6 38h30M6 41h28M6 44h30M6 47h32" stroke="#303030" strokeDasharray="4 2 7 2" />
      <path d="M5 51h14M5 54h10M5 57h12" stroke="#2f8a2a" strokeDasharray="4 1" />
      <rect x="48.500" y="48.500" width="21" height="22" rx="5" fill="#111a1e" stroke="#8c8f91" strokeWidth="1.300" />
      <path d="M52 56h3M57 53v5" stroke="#4db43a" strokeWidth="1.800" />
    </>
  );
}

function Trash() {
  return (
    <>
      <path d="M12.500 14h51L58 66q-.5 5-20 5t-20-5z" fill="url(#trash)" />
      <ellipse cx="38" cy="14.500" rx="25.500" ry="5" fill="#5d6063" stroke="#a9adb0" strokeWidth="1.500" />
      <path d="M17 14l6-8 6 3 5-5 6 5 6-5 4 5 6-1 4 7-8 4-7-2-6 3-6-3-8 3z" fill="#e9e9ea" />
      <path d="M24 8l4 7M40 6l-4 9M50 8l3 7M33 12l5 4" stroke="#8b8b90" />
      <path d="M31 12l4 2M47 14l5-3" stroke="#c45a3b" strokeWidth="2" />
      <path d="M43 9l4 2" stroke="#3f8bd0" strokeWidth="2" />
    </>
  );
}

type DockItem = { name: string; art: ReactNode; running?: boolean };

const apps: DockItem[] = [
  { name: "finder", art: <Finder />, running: true },
  { name: "launchpad", art: <Launchpad /> },
  { name: "code", art: <Code />, running: true },
  { name: "fusion", art: <VmFusion /> },
  { name: "pycharm", art: <PyCharm /> },
  { name: "arduino", art: <Arduino /> },
  { name: "remote", art: <RemoteDesktop /> },
  { name: "terminal", art: <Terminal />, running: true },
  { name: "calibre", art: <Calibre /> },
  { name: "chrome", art: <Chrome /> },
  { name: "firefox", art: <Firefox />, running: true },
  { name: "safari", art: <Safari /> },
  { name: "mail", art: <Mail />, running: true },
  { name: "word", art: <Office letter="W" badge="#2559b4" shades={["#5aa4e8", "#3f7fd0", "#2a5fb8", "#1c438f"]} />, running: true },
  { name: "excel", art: <Office letter="X" badge="#24733f" shades={["#56b47d", "#3f9a62", "#2c7f49", "#27573a"]} /> },
  { name: "powerpoint", art: <Office letter="P" badge="#b73f20" shades={["#ee9270", "#de7350", "#c65636"]} round /> },
  { name: "photos", art: <Photos /> },
  { name: "calendar", art: <Calendar /> },
  { name: "music", art: <Music />, running: true },
  { name: "notes", art: <Notes />, running: true },
  { name: "settings", art: <Settings /> },
  { name: "docker", art: <DockerApp />, running: true },
  { name: "preview", art: <Preview /> },
  { name: "netbeans", art: <NetBeans />, running: true },
];

const recents: DockItem[] = [
  { name: "textedit", art: <TextEdit /> },
  { name: "disk", art: <DiskUtility /> },
  { name: "raspberry", art: <Raspberry />, running: true },
];

const places: DockItem[] = [
  { name: "downloads", art: <Downloads /> },
  { name: "window", art: <TerminalWindow /> },
  { name: "trash", art: <Trash /> },
];

function DockGroup({ items }: { items: DockItem[] }) {
  return (
    <div className="flex">
      {items.map((it) => (
        <div key={it.name} className="flex w-[76px] flex-col items-center">
          <svg className="h-[76px] w-[76px]" viewBox="0 0 76 76">
            {it.art}
          </svg>
          {it.running && <span className="h-2 w-2 rounded-full bg-[#aab2dc]" />}
        </div>
      ))}
    </div>
  );
}

function Grad({ id, stops, diag }: { id: string; stops: string[]; diag?: boolean }) {
  return (
    <linearGradient id={id} x1="0" y1="0" x2={diag ? "1" : "0"} y2="1">
      {stops.map((s, i) => (
        <stop key={s} offset={i / (stops.length - 1)} stopColor={s} />
      ))}
    </linearGradient>
  );
}

function Dock() {
  return (
    <div className="relative flex h-[94px] w-[2360px] rounded-[32px] border-2 border-[#545a7c] bg-[linear-gradient(90deg,#2b3658_0%,#2c3558_40%,#33335a_55%,#36345a_75%,#3b345a_100%)] pl-1 pt-1 shadow-[0_0_80px_rgba(0,0,0,0.25),0_0_0_1px_rgba(10,14,35,0.6)]">
      <svg className="absolute h-0 w-0">
        <defs>
          <Grad id="finderBlue" stops={["#55c4fb", "#3270ea"]} />
          <Grad id="silver" stops={["#f4f4f5", "#d3dae4"]} />
          <Grad id="vmBlue" stops={["#4f93da", "#235ba8"]} />
          <Grad id="vmRed" stops={["#e8655c", "#b92b27"]} />
          <Grad id="pycharm" stops={["#4ecf95", "#fbf35c", "#fbf460", "#fbf463"]} diag />
          <Grad id="termEdge" stops={["#dcecf5", "#7d7d7d"]} />
          <Grad id="foxFlame" stops={["#fff14f", "#ffa436", "#ff5a40", "#e6336a"]} />
          <Grad id="foxGlobe" stops={["#a442e0", "#5c3cc4"]} />
          <Grad id="safari" stops={["#46a6f2", "#2f72d8"]} />
          <Grad id="mail" stops={["#3470ea", "#58c2f8"]} />
          <Grad id="music" stops={["#ed6076", "#e83b46"]} />
          <Grad id="prefs" stops={["#cfdbe2", "#8f8f8f"]} />
          <Grad id="trash" stops={["#77797b", "#8f9193", "#6d6f71"]} diag />
        </defs>
      </svg>
      <DockGroup items={apps} />
      <span className="ml-[16px] mr-[16px] mt-[6px] h-[70px] w-[2px] bg-[#73708f]" />
      <DockGroup items={recents} />
      <span className="ml-[18px] mr-[14px] mt-[6px] h-[70px] w-[2px] bg-[#73708f]" />
      <DockGroup items={places} />
    </div>
  );
}

/* ------------------------------------------------------------------ */

export default function App() {
  return (
    <div className="flex h-[2240px] w-[3584px] flex-col overflow-hidden bg-[linear-gradient(90deg,#1c4068_0%,#25466f_16%,#27426e_45%,#32457a_62%,#3d4a7c_84%,#574572_93%,#7a4462_100%)] font-['Inter',sans-serif]">
      <MenuBar />
      <div className="h-[2px] shrink-0 bg-[linear-gradient(90deg,#a82e4e_0%,#8a3858_18%,#2c5f90_19%,#1f4f7c_100%)]" />
      <div className="flex h-[2084px] w-full shrink-0 flex-col overflow-hidden rounded-[20px] bg-[#2b2a33] shadow-[0_0_0_1px_#000,0_14px_44px_rgba(0,0,0,0.75)]">
        <TabStrip />
        <Toolbar />
        <BookmarksBar />
        <div className="h-[2px] shrink-0 bg-[#0c0c0d]" />
        <LoginPage />
      </div>
      <div className="flex flex-1 justify-center pt-[2px]">
        <Dock />
      </div>
    </div>
  );
}
